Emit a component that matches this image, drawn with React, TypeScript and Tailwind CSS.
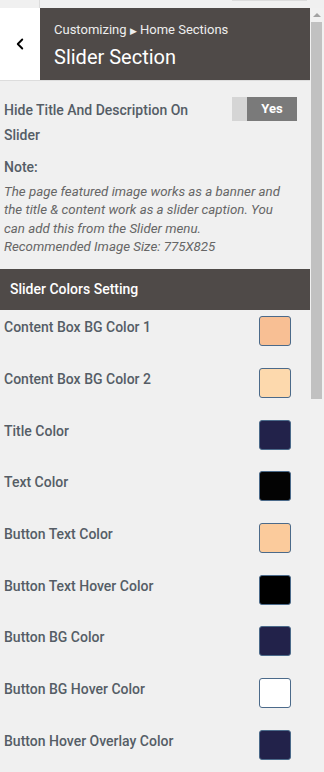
import { ChevronLeft } from 'lucide-react';

const colorRows = [
  { label: 'Content Box BG Color 1', color: '#f8bf94' },
  { label: 'Content Box BG Color 2', color: '#fdd9ad' },
  { label: 'Title Color', color: '#22224a' },
  { label: 'Text Color', color: '#030303' },
  { label: 'Button Text Color', color: '#fbcb9c' },
  { label: 'Button Text Hover Color', color: '#000000' },
  { label: 'Button BG Color', color: '#22224a' },
  { label: 'Button BG Hover Color', color: '#ffffff' },
  { label: 'Button Hover Overlay Color', color: '#22224a' },
];

export default function App() {
  return (
    <div className="w-[324px] h-[772px] overflow-hidden bg-[#f0f0f0] font-['Roboto',sans-serif]">
      {/* top strip */}
      <div className="flex h-[8px]">
        <div className="w-[40px] border-r border-[#dcdcdc]" />
        <div className="flex-1 flex justify-end pr-[17px]">
          <div className="w-[75px] h-[1px] bg-[#dcdcdc]" />
        </div>
      </div>

      <div className="flex">
        <div className="w-[310px]">
          {/* header */}
          <div className="flex h-[73px] border-b border-[#dddddd]">
            <div className="w-[40px] bg-white flex items-center justify-center">
              <ChevronLeft className="size-[18px] text-black" strokeWidth={2.5} />
            </div>
            <div className="flex-1 bg-[#4f4a48] pl-[14px] pt-[13px]">
              <div className="text-[13px] leading-[18px] text-[#eeeeee]">
                Customizing <span className="text-[9px]">▶</span> Home Sections
              </div>
              <div className="text-[20px] leading-[26px] text-white mt-[4px]">Slider Section</div>
            </div>
          </div>

          {/* toggle row */}
          <div className="flex justify-between pl-[4px] pr-[13px] pt-[17px]">
            <div className="text-[14px] leading-[25px] font-medium text-[#555d66] w-[200px]">
              Hide Title And Description On Slider
            </div>
            <div className="flex h-[24px] mt-[-1px]">
              <div className="w-[15px] bg-[#d5d5d5]" />
              <div className="w-[50px] bg-[#7a7a7a] text-white text-[13px] font-bold flex items-center justify-center">
                Yes
              </div>
            </div>
          </div>

          {/* note */}
          <div className="px-[4px] pt-[9px]">
            <div className="text-[14px] leading-[20px] font-medium text-[#555d66]">Note:</div>
            <p className="text-[13.3px] leading-[18.3px] italic text-[#666666] mt-[6px] pr-[18px]">
              The page featured image works as a banner and the title &amp; content work as a slider caption. You can add this from the Slider menu.
              <br />
              Recommended Image Size: 775X825
            </p>
          </div>

          {/* section bar */}
          <div className="mt-[13px] h-[41px] bg-[#4f4a48] flex items-center px-[10px]">
            <span className="text-[14px] font-medium text-white">Slider Colors Setting</span>
          </div>

          {/* color rows */}
          <div className="flex flex-col">
            {colorRows.map((row) => (
              <div key={row.label} className="flex items-start justify-between h-[51.7px] pl-[4px] pr-[19px]">
                <span className="text-[14px] leading-[20px] font-medium text-[#555d66] mt-[7px]">{row.label}</span>
                <div
                  className="w-[32px] h-[30px] mt-[6px] rounded-[3px] border border-[#4b6a8a]"
                  style={{ backgroundColor: row.color }}
                />
              </div>
            ))}
          </div>
        </div>

        {/* scrollbar */}
        <div className="w-[14px] bg-[#f1f1f1] flex flex-col items-center">
          <div className="h-[14px] flex items-center justify-center">
            <div className="w-0 h-0 border-l-[4px] border-r-[4px] border-b-[4px] border-l-transparent border-r-transparent border-b-[#a3a3a3]" />
          </div>
          <div className="w-[11px] h-[377px] bg-[#c1c1c1] ml-[-2px]" />
        </div>
      </div>
    </div>
  );
}
